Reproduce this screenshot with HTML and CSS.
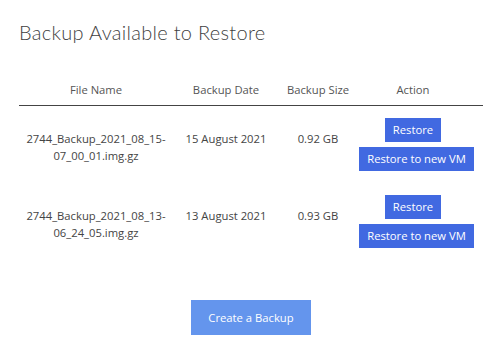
FILE: index.html
```html
<!DOCTYPE html>
<html>
<head>
<meta charset="utf-8">
<link rel="stylesheet" href="styles.css">
</head>
<body>
<div class="page">
  <h1 class="title">Backup Available to Restore</h1>
  <div class="table">
    <div class="row head">
      <div class="cell">File Name</div>
      <div class="cell">Backup Date</div>
      <div class="cell">Backup Size</div>
      <div class="cell">Action</div>
    </div>
    <div class="row body">
      <div class="cell text">2744_Backup_2021_08_15-<br>07_00_01.img.gz</div>
      <div class="cell text">15 August 2021</div>
      <div class="cell text">0.92 GB</div>
      <div class="cell actions">
        <button class="btn">Restore</button>
        <button class="btn wide">Restore to new VM</button>
      </div>
    </div>
    <div class="row body">
      <div class="cell text">2744_Backup_2021_08_13-<br>06_24_05.img.gz</div>
      <div class="cell text">13 August 2021</div>
      <div class="cell text">0.93 GB</div>
      <div class="cell actions">
        <button class="btn">Restore</button>
        <button class="btn wide">Restore to new VM</button>
      </div>
    </div>
  </div>
  <div class="footer">
    <button class="create">Create a Backup</button>
  </div>
</div>
</body>
</html>
```
FILE: styles.css
```css
* { box-sizing: border-box; }
html, body { margin: 0; padding: 0; background: #fff; }
body {
  font-family: "Open Sans", "Liberation Sans", sans-serif;
  font-size: 11.25px;
  color: #444;
  width: 500px;
  height: 350px;
  overflow: hidden;
}
.page {
  padding: 20px 17px 0 19px;
}
.title {
  margin: 0;
  font-family: "Lato", "Open Sans", sans-serif;
  font-weight: 300;
  font-size: 20px;
  line-height: 24px;
  color: #3f3f3f;
  letter-spacing: 0.3px;
}
.table {
  margin-top: 29px;
  width: 464px;
}
.row {
  display: grid;
  grid-template-columns: 154px 106px 78px 112px;
}
.row.head {
  height: 33px;
  align-items: center;
  border-bottom: 1px solid #444;
}
.row.head .cell {
  text-align: center;
  color: #555;
}
.row.body {
  height: 77px;
}
.cell.text {
  text-align: center;
  padding-top: 25px;
  line-height: 16.5px;
}
.cell.actions {
  display: flex;
  flex-direction: column;
  align-items: center;
  gap: 5px;
  padding-top: 12px;
}
.btn {
  font-family: "Open Sans", "Liberation Sans", sans-serif;
  font-size: 11.25px;
  color: #fff;
  background: #4169e1;
  border: none;
  height: 24px;
  padding: 0 8px;
  line-height: 24px;
  white-space: nowrap;
}
.btn.wide {
  margin-left: 7px;
}
.footer {
  display: flex;
  justify-content: center;
  margin-top: 40px;
  width: 464px;
}
.create {
  font-family: "Open Sans", "Liberation Sans", sans-serif;
  font-size: 11.25px;
  color: #fff;
  background: #6495ed;
  border: none;
  width: 120px;
  height: 35px;
}
```
